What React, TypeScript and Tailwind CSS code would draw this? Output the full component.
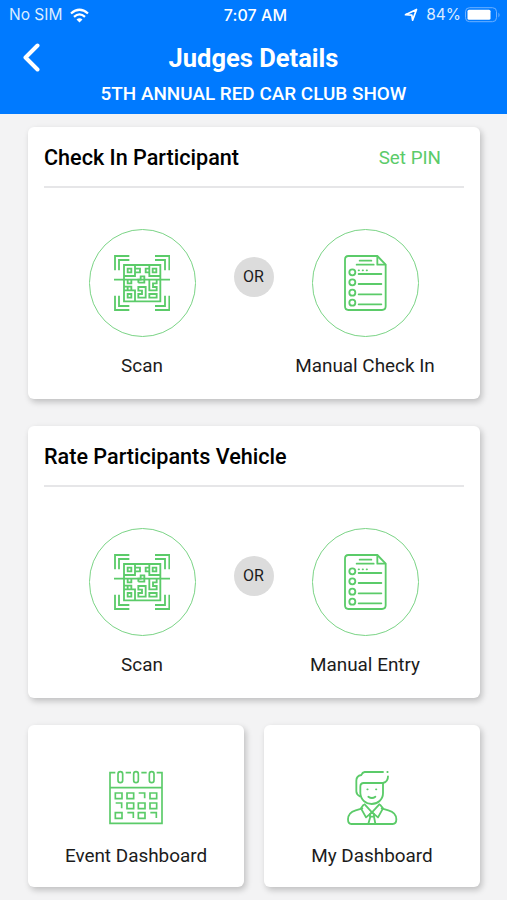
import type { ReactNode } from "react";

const GREEN = "#5bcb69";

function ScanIcon() {
  return (
    <svg className="w-14 h-14" viewBox="97 99 168 168" fill="none" stroke={GREEN} strokeWidth="5.5">
      {/* Corner brackets */}
      <path d="M100 145V102H143M112 145V114H143" />
      <path d="M220 102H263V145M220 114H250V145" />
      <path d="M100 221V264H143M112 221V252H143" />
      <path d="M220 264H263V221M220 252H250V221" />
      {/* QR code */}
      <path d="M127 129H236V238H127Z" />
      <path d="M97 173H265" />
      <path d="M138 140H149V151H138ZM213 140H224V151H213ZM138 216H149V227H138Z" />
      <path d="M127 162H160V129M203 129V162H236M127 205H160V238" />
      <path d="M160 140H175V151H160M203 140H192V151H203" />
      <path d="M170 182V173H177V163H188V182H170" />
      <path d="M138 173V184H149V173M127 194H149V205M138 194V205" />
      <path d="M170 195H192V227H170V216H181V206H170Z" />
      <path d="M203 173V205H225V195H214V184H225V173M203 216H225V227H203Z" />
    </svg>
  );
}

function ListIcon() {
  return (
    <svg className="w-14 h-14" viewBox="97 98 168 168" fill="none" stroke={GREEN} strokeWidth="5.5" strokeLinecap="round" strokeLinejoin="round">
      <path d="M131 101H218L243 127V252Q243 263 232 263H131Q121 263 121 252V112Q121 101 131 101Z" />
      <path d="M218 102V127H242" />
      <path d="M165 115H200M156 127H207" />
      <path d="M162 144H163M174 144H175M186 144H187" />
      <path d="M162 155H230M162 185H230M162 216H230M162 246H230" />
      <circle cx="143" cy="150" r="9" />
      <circle cx="143" cy="180" r="9" />
      <circle cx="143" cy="211" r="9" />
      <circle cx="143" cy="241" r="9" />
    </svg>
  );
}

function CalendarIcon() {
  return (
    <svg className="w-14 h-14" viewBox="25 27 168 168" fill="none" stroke={GREEN} strokeWidth="5">
      <path d="M47 38H31V190H187V38H171M78 38H94M125 38H141M31 83H187" />
      <rect x="55" y="35" width="14" height="33" rx="7" />
      <rect x="102" y="35" width="14" height="33" rx="7" />
      <rect x="149" y="35" width="14" height="33" rx="7" />
      <path d="M47 99H67V116H47ZM82 99H102V116H82ZM151 99H171V116H151Z" />
      <path d="M82 129H102V146H82ZM116 129H136V146H116ZM151 129H171V146H151Z" />
      <path d="M47 158H67V175H47ZM116 158H136V175H116Z" />
      <path d="M117 99H135V115M48 129H66V145M83 158H101V174M152 158H170V174" />
    </svg>
  );
}

function JudgeIcon() {
  return (
    <svg className="w-14 h-14" viewBox="25 27 168 168" fill="none" stroke={GREEN} strokeWidth="5.5" strokeLinecap="round" strokeLinejoin="round">
      {/* Hair */}
      <path d="M142 36H87Q80 37 77 45Q62 48 62 62V94Q62 103 72 109" />
      <path d="M155 36H156M157 49Q157 66 142 69H84Q74 69 74 80V99C75 121 92 132 108 132C126 132 142 119 142 100V69" />
      {/* Face */}
      <path d="M95 88H96M121 88H122M98 110Q109 118 119 110" />
      {/* Shoulders, collar and tie */}
      <path d="M80 145L60 151Q37 158 37 178Q37 192 47 192H171Q182 192 182 178Q182 158 158 151L138 145" />
      <path d="M83 135L76 145L91 172L109 157L87 133M134 135L142 145L127 172L109 157L131 133" />
      <path d="M103 162L109 157L115 162V170H103ZM104 170L98 191M115 170L119 191" />
    </svg>
  );
}

function StatusBar() {
  return (
    <div className="grid grid-cols-3 items-center h-[30px] px-[9px] font-['Inter',sans-serif] text-[15.5px] text-white">
      <div className="flex items-center gap-2">
        <span className="text-[#dcecff]">No SIM</span>
        <svg className="w-[19px] h-[15px]" viewBox="0 0 19 15" fill="none" stroke="white" strokeWidth="2.3">
          <path d="M1 5.5Q9.5-2 18 5.5M4 8.8Q9.5 4 15 8.8" />
          <path d="M6.5 11.4Q9.5 8.9 12.5 11.4L9.5 14.4Z" fill="white" stroke="none" />
        </svg>
      </div>
      <span className="pl-1 text-center text-[16px] font-medium tracking-[0.1px] whitespace-nowrap">7:07 AM</span>
      <div className="flex items-center justify-end">
        <svg className="w-[14px] h-[14px] mr-2" viewBox="0 0 14 14" fill="none" stroke="white" strokeWidth="1.7" strokeLinejoin="round">
          <path d="M1.5 6.7L12.5 1.5L8.6 12.2L7.8 7.2Z" />
        </svg>
        <span className="text-[#dcecff]">84%</span>
        <svg className="w-9 h-4 ml-1 -mr-[3px]" viewBox="0 0 36 16">
          <rect x="0.5" y="0.7" width="31" height="14" rx="4" fill="none" stroke="#6db0ff" />
          <rect x="2.5" y="2.7" width="23" height="10" rx="1.5" fill="white" />
          <path d="M33.5 5.5Q35.5 8 33.5 10.5Z" fill="#7db9ff" />
        </svg>
      </div>
    </div>
  );
}

function Option({ label, children }: { label: string; children: ReactNode }) {
  return (
    <div className="flex flex-col items-center w-[150px]">
      <button className="flex items-center justify-center w-[107px] h-[108px] rounded-full border border-[#7bd486]">
        {children}
      </button>
      <span className="mt-[14px] text-[18.9px] leading-[29px] text-[#1c1c1c] whitespace-nowrap">{label}</span>
    </div>
  );
}

function CheckCard({ title, manualLabel, action }: { title: string; manualLabel: string; action?: string }) {
  return (
    <section className="h-[272px] px-4 bg-white rounded-md shadow-[2px_3px_6px_rgba(0,0,0,0.22)]">
      <div className="flex items-center justify-between h-[61px] pt-[4px] pr-[23px] border-b-2 border-[#e6e6e8]">
        <h2 className="text-[21.6px] font-medium text-black">{title}</h2>
        {action && <button className="text-[18.8px] text-[#5bcb69]">{action}</button>}
      </div>
      <div className="flex justify-center mt-[41px] -ml-px">
        <Option label="Scan"><ScanIcon /></Option>
        <div className="flex justify-center w-[73px] pt-[28px]">
          <span className="flex items-center justify-center w-10 h-10 rounded-full bg-[#dcdcdc] text-base text-[#1c1c1c]">OR</span>
        </div>
        <Option label={manualLabel}><ListIcon /></Option>
      </div>
    </section>
  );
}

function DashboardCard({ label, children }: { label: string; children: ReactNode }) {
  return (
    <button className="flex flex-col items-center h-[162px] pt-[44px] bg-white rounded-md shadow-[2px_3px_6px_rgba(0,0,0,0.22)]">
      {children}
      <span className="mt-[16px] text-[18.9px] leading-[29px] text-[#1c1c1c]">{label}</span>
    </button>
  );
}

export default function App() {
  return (
    <div className="w-[507px] h-[900px] overflow-hidden bg-[#f3f3f4] font-['Roboto',sans-serif]">
      <header className="h-[114px] bg-[#007aff] text-white">
        <StatusBar />
        <div className="grid grid-cols-[60px_1fr_60px] items-center h-[54px]">
          <button className="pl-[22px]">
            <svg className="w-[20px] h-[30px]" viewBox="0 0 20 30" fill="none" stroke="white" strokeWidth="4" strokeLinecap="round" strokeLinejoin="round">
              <path d="M15.5 3.5L3.5 15.5L15.5 27.5" />
            </svg>
          </button>
          <h1 className="pt-[2px] text-center text-[25.5px] font-bold">Judges Details</h1>
        </div>
        <p className="text-center text-[18.9px] leading-5 font-medium">5TH ANNUAL RED CAR CLUB SHOW</p>
      </header>

      <main className="flex flex-col gap-[27px] w-[452px] ml-7 mt-[13px]">
        <CheckCard title="Check In Participant" manualLabel="Manual Check In" action="Set PIN" />
        <CheckCard title="Rate Participants Vehicle" manualLabel="Manual Entry" />
        <div className="grid grid-cols-2 gap-5">
          <DashboardCard label="Event Dashboard"><CalendarIcon /></DashboardCard>
          <DashboardCard label="My Dashboard"><JudgeIcon /></DashboardCard>
        </div>
      </main>
    </div>
  );
}
